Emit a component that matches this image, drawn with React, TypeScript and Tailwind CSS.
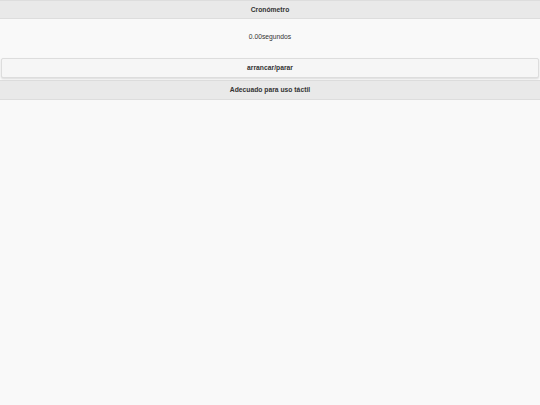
export default function App() {
  return (
    <div className="min-h-[405px] bg-[#f9f9f9] text-[#333] font-['Liberation_Sans',Arial,sans-serif]">
      {/* cabecera */}
      <div className="h-[19px] pt-px border-y border-[#dddddd] bg-[#e9e9e9] flex items-center justify-center">
        <h1 className="text-[6.75px] font-bold leading-none">Cronómetro</h1>
      </div>

      <div className="flex flex-col">
        <p className="h-[39px] pb-[3px] flex items-center justify-center text-[6.75px] leading-none">
          0.00segundos
        </p>
        <button className="h-[20px] pt-px mx-px border border-[#dddddd] rounded-[2px] bg-[#f6f6f6] shadow-[0_1px_2px_rgba(0,0,0,0.12)] text-[6.75px] font-bold leading-none text-[#333]">
          arrancar/parar
        </button>
      </div>

      {/* pie */}
      <div className="mt-[2px] h-[20px] pt-px border-y border-[#dddddd] bg-[#e9e9e9] flex items-center justify-center">
        <h4 className="text-[6.75px] font-bold leading-none">Adecuado para uso táctil</h4>
      </div>
    </div>
  );
}
